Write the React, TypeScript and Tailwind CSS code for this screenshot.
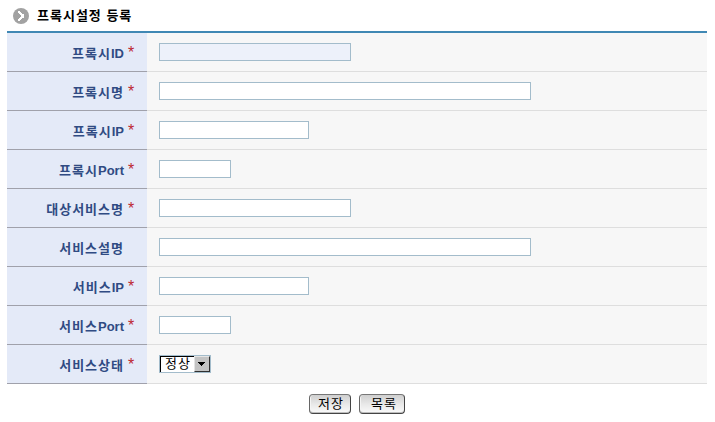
import React from "react";

type Field = {
  ko: string;
  latin?: string;
  required?: boolean;
  width?: string;
  disabled?: boolean;
};

const fields: Field[] = [
  { ko: "프록시", latin: "ID", required: true, width: "w-48", disabled: true },
  { ko: "프록시명", required: true, width: "w-[372px]" },
  { ko: "프록시", latin: "IP", required: true, width: "w-[150px]" },
  { ko: "프록시", latin: "Port", required: true, width: "w-[72px]" },
  { ko: "대상서비스명", required: true, width: "w-48" },
  { ko: "서비스설명", width: "w-[372px]" },
  { ko: "서비스", latin: "IP", required: true, width: "w-[150px]" },
  { ko: "서비스", latin: "Port", required: true, width: "w-[72px]" },
  { ko: "서비스상태", required: true },
];

function StatusSelect() {
  return (
    <button
      type="button"
      className="flex h-[18px] w-[52px] border border-[#a3bccb] bg-white text-left"
    >
      <span className="flex h-4 w-[34px] border-t border-l border-black pl-1 text-[13px] leading-[13px] tracking-[1px] text-black">
        정상
      </span>
      <span className="flex h-4 w-4 items-center justify-center border border-t-[#e4e4e4] border-r-[#303030] border-b-[#303030] border-l-[#e4e4e4] bg-[#c3c3c3]">
        <svg className="shrink-0" width="8" height="4" viewBox="0 0 8 4" shapeRendering="crispEdges">
          <path d="M0 0h7v1H6v1H5v1H4v1H3V3H2V2H1V1H0z" fill="#000" />
        </svg>
      </span>
    </button>
  );
}

function FormRow({ field }: { field: Field }) {
  return (
    <div className="flex h-[39px]">
      <div className="flex w-[140px] justify-end border-b border-[#a0a1ab] bg-[#e4eaf8] pt-[11px] pr-3 text-[13px] leading-5 font-bold text-[#304b83]">
        <span className="tracking-[1px]">{field.ko}</span>
        {field.latin && <span>{field.latin}</span>}
        <span className="w-[11px] pl-1 text-base leading-[18px] font-normal text-[#bd2830]">
          {field.required ? "*" : ""}
        </span>
      </div>
      <div className="flex-1 border-b border-[#dedede] bg-[#f7f7f7] pt-2.5 pl-3">
        {field.width ? (
          <input
            type="text"
            disabled={field.disabled}
            className={`block h-[18px] border border-[#a3bccb] px-1 text-xs outline-none ${field.width} ${
              field.disabled ? "bg-[#edf1fa]" : "bg-white"
            }`}
          />
        ) : (
          <StatusSelect />
        )}
      </div>
    </div>
  );
}

function ActionButton({ label, size }: { label: string; size: string }) {
  return (
    <button
      type="button"
      className={`flex h-5 rounded-[4px] border border-t-[#777777] border-r-[#444444] border-b-[#444444] border-l-[#666666] bg-linear-to-b from-[#cfcfcf] via-[#e8e8e8] to-[#fafafa] text-[13px] leading-[17px] tracking-[1px] text-black shadow-[inset_0_-1px_0_#bdbdbd,inset_1px_0_0_#f4f4f4] ${size}`}
    >
      {label}
    </button>
  );
}

export default function App() {
  return (
    <main className="h-[422px] w-[715px] overflow-hidden bg-white pr-2 pl-[7px] font-['Liberation_Sans','Noto_Sans_CJK_KR',sans-serif]">
      <header className="flex h-[31px] pt-2 pl-1.5">
        <svg className="shrink-0" width="16" height="16" viewBox="0 0 16 16">
          <circle cx="8" cy="8" r="8" fill="#a2a2a2" />
          <path
            d="M5 3h2v1h1v1h1v1h2v4H9v1H8v1H7v1H5v-2h1v-1h1V9h1V7H7V6H6V5H5z"
            fill="#fff"
            shapeRendering="crispEdges"
          />
        </svg>
        <h1 className="-mt-0.5 pl-2 text-[13px] leading-5 font-bold tracking-[1px] text-black">
          프록시설정 등록
        </h1>
      </header>
      <section className="border-t-2 border-[#4088b4]">
        {fields.map((field) => (
          <FormRow key={field.ko + (field.latin ?? "")} field={field} />
        ))}
      </section>
      <footer className="flex gap-2 pt-2.5 pl-[302px]">
        <ActionButton label="저장" size="w-[42px] pl-2" />
        <ActionButton label="목록" size="w-[46px] pl-[11px]" />
      </footer>
    </main>
  );
}
